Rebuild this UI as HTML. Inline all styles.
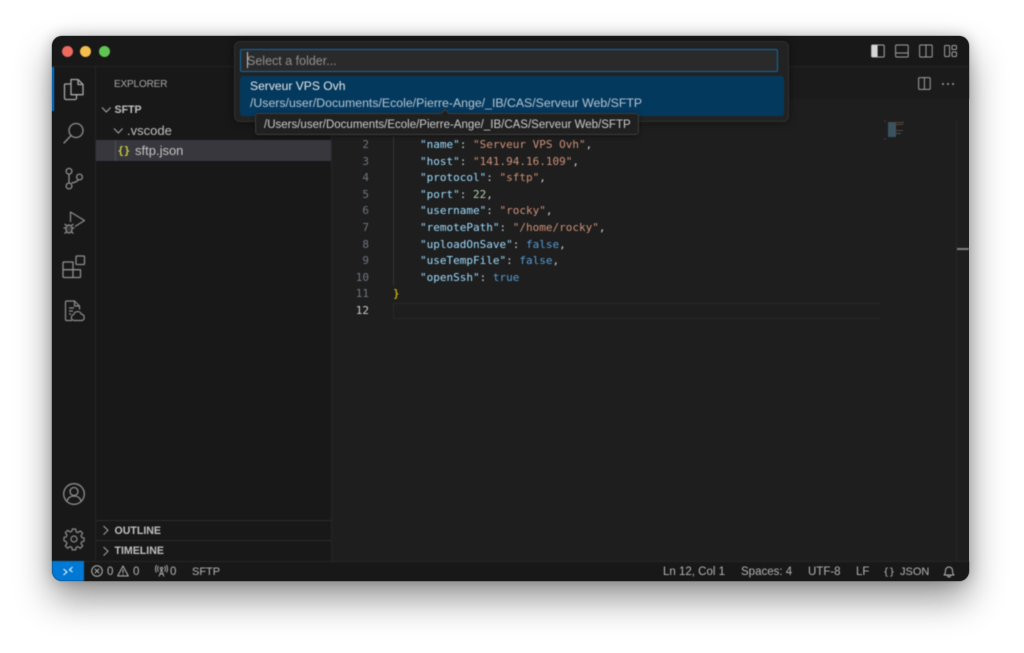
<!DOCTYPE html>
<html>
<head>
<meta charset="utf-8">
<style>
html,body{margin:0;padding:0;width:1024px;height:653px;overflow:hidden;background:#fff;}
*{box-sizing:border-box;}
body{font-family:"Liberation Sans",sans-serif;position:relative;}
.a{position:absolute;white-space:nowrap;}
#win{position:absolute;left:52px;top:36px;width:917px;height:545px;border-radius:10px;background:#1e1e1e;box-shadow:0 18px 36px rgba(0,0,0,.42),0 0 14px rgba(0,0,0,.22);overflow:hidden;}
.layer{position:absolute;left:0;top:0;width:1024px;height:653px;filter:blur(.4px);}
.code{font-family:"DejaVu Sans Mono","Liberation Mono",monospace;font-size:11px;line-height:16.6px;color:#9cdcfe;}
.ln{font-family:"DejaVu Sans Mono","Liberation Mono",monospace;font-size:11px;line-height:16.6px;color:#6e7681;text-align:right;width:30px;left:339px;}
.s{color:#ce9178}.p{color:#cccccc}.n{color:#b5cea8}.b{color:#569cd6}
.st{font-size:11.5px;color:#b4b4b4;top:565.500px;line-height:13px;}
svg{position:absolute;overflow:visible;fill:none;}
</style>
</head>
<body>
<div id="win"></div>
<div class="layer">
  <!-- regions -->
  <div class="a" style="left:52px;top:36px;width:917px;height:31px;background:#181818;border-radius:10px 10px 0 0;border-bottom:1px solid #232323;"></div>
  <div class="a" style="left:52px;top:67px;width:44px;height:494px;background:#181818;border-right:1px solid #262626;"></div>
  <div class="a" style="left:96px;top:67px;width:236px;height:494px;background:#181818;border-right:1px solid #262626;"></div>
  <div class="a" style="left:332px;top:67px;width:637px;height:32px;background:#1b1b1b;"></div>
  <div class="a" style="left:52px;top:561px;width:917px;height:20px;background:#181818;border-top:1px solid #262626;border-radius:0 0 10px 10px;"></div>
  <div class="a" style="left:52px;top:561px;width:32px;height:20px;background:#0078d4;border-radius:0 0 0 10px;"></div>

  <!-- traffic lights -->
  <div class="a" style="left:62px;top:46px;width:11px;height:11px;border-radius:50%;background:#ed6a5e;"></div>
  <div class="a" style="left:80px;top:46px;width:11px;height:11px;border-radius:50%;background:#f5bf4f;"></div>
  <div class="a" style="left:99px;top:46px;width:11px;height:11px;border-radius:50%;background:#61c554;"></div>

  <!-- activity bar -->
  <div class="a" style="left:52px;top:67px;width:2px;height:44px;background:#0078d4;"></div>
  <svg style="left:63px;top:78px" width="22" height="23" stroke="#a8a8a8" stroke-width="1.300" stroke-linejoin="round"><path d="M8 1.500h7l5 5v10.200h-12z"/><path d="M15 1.500v5h5"/><path d="M8 6H2.500a1 1 0 0 0-1 1v13a1.500 1.500 0 0 0 1.500 1.500h9a1.500 1.500 0 0 0 1.500-1.500v-3.300"/></svg>
  <svg style="left:63px;top:122px" width="22" height="23" stroke="#8e8e8e" stroke-width="1.300"><circle cx="13" cy="8.500" r="7"/><path d="M8 13.500L1 21" stroke-linecap="round"/></svg>
  <svg style="left:64px;top:167px" width="20" height="23" stroke="#8e8e8e" stroke-width="1.300"><circle cx="5" cy="4.300" r="2.900"/><circle cx="5" cy="19" r="2.900"/><circle cx="15.500" cy="10" r="2.900"/><path d="M5 7.200v8.900M7.500 16c4-.5 6-2 7-3.300"/></svg>
  <svg style="left:62px;top:210px" width="24" height="25" stroke="#8e8e8e" stroke-width="1.200" stroke-linejoin="round"><path d="M8.500 12V2L22.500 10.500 13 16.500"/><path d="M4 18a3 3 0 0 1 6 0v2a3 3 0 0 1-6 0z" fill="#8e8e8e" fill-opacity=".25"/><path d="M4 18H1.500M10 18h2.500M4.500 15.500L2.500 14M9.500 15.500L11.500 14M4.500 22L2.500 23.500M9.500 22L11.500 23.500"/></svg>
  <svg style="left:62px;top:255px" width="24" height="24" stroke="#8e8e8e" stroke-width="1.300" stroke-linejoin="round"><rect x="14" y="1" width="8.500" height="8.500" rx="1"/><path d="M2 7h9v15.500H2a1 1 0 0 1-1-1V8a1 1 0 0 1 1-1zM1 14.700h17.500M11 14.700h7.500v6.800a1 1 0 0 1-1 1H11z"/></svg>
  <svg style="left:64px;top:300px" width="21" height="22" stroke="#8e8e8e" stroke-width="1.200" stroke-linejoin="round"><path d="M8 20.500H2.500a1 1 0 0 1-1-1V2a1 1 0 0 1 1-1h8l5 5v3.500"/><path d="M10.500 1v5h5"/><path d="M5 8h5M5 11h4M5 14h2"/><path d="M10 20.500a3 3 0 0 1-.3-5.900 4 4 0 0 1 7.600-.5 3.300 3.300 0 0 1 .7 6.400z" fill="#181818"/></svg>
  <svg style="left:63px;top:483px" width="22" height="22" stroke="#8e8e8e" stroke-width="1.300"><circle cx="11" cy="11" r="10.300"/><circle cx="11" cy="8.500" r="4"/><path d="M4 18c1-3.500 4-5 7-5s6 1.500 7 5"/></svg>
  <svg style="left:63px;top:528px" width="22" height="22" viewBox="0 0 22 22" stroke="#8e8e8e" stroke-width="1.200" stroke-linejoin="round"><circle cx="11" cy="11" r="3"/><path d="M9.300 1h3.400l.5 2.900 1.700.7 2.400-1.700 2.400 2.400-1.700 2.400.7 1.700 2.300.5v3.400l-2.300.5-.7 1.700 1.700 2.400-2.400 2.400-2.400-1.700-1.700.7-.5 2.600H9.300l-.5-2.600-1.700-.7-2.400 1.700-2.400-2.400 1.700-2.400-.7-1.700L1 12.700V9.300l2.300-.5.700-1.700-1.700-2.400 2.400-2.400 2.400 1.700 1.700-.7z"/></svg>

  <!-- sidebar -->
  <div class="a" style="left:114px;top:77.500px;font-size:10px;letter-spacing:-.15px;line-height:14px;color:#a8a8a8;">EXPLORER</div>
  <svg style="left:101px;top:106px" width="11" height="8" stroke="#a8a8a8" stroke-width="1"><path d="M1 1.500l4.300 4.500 4.300-4.500"/></svg>
  <div class="a" style="left:114.500px;top:103px;font-size:10.600px;font-weight:bold;line-height:14px;color:#c0c0c0;">SFTP</div>
  <svg style="left:113px;top:127px" width="11" height="8" stroke="#a8a8a8" stroke-width="1"><path d="M1 1.500l4.300 4.500 4.300-4.500"/></svg>
  <div class="a" style="left:127px;top:123px;font-size:13px;line-height:15px;color:#c0c0c0;">.vscode</div>
  <div class="a" style="left:96px;top:140px;width:235px;height:21px;background:#37373d;"></div>
  <div class="a" style="left:115px;top:140px;width:1px;height:21px;background:#4c4c52;"></div>
  <div class="a" style="left:117.500px;top:144px;font-family:'DejaVu Sans Mono',monospace;font-size:10.500px;font-weight:bold;line-height:14px;color:#cbcb41;">{}</div>
  <div class="a" style="left:135px;top:143px;font-size:13px;line-height:15px;color:#c4c4c4;">sftp.json</div>

  <div class="a" style="left:96px;top:520px;width:235px;height:1px;background:#2b2b2b;"></div>
  <div class="a" style="left:96px;top:540px;width:235px;height:1px;background:#2b2b2b;"></div>
  <svg style="left:102px;top:525px" width="8" height="11" stroke="#a8a8a8" stroke-width="1"><path d="M1.500 1l4.500 4.300-4.500 4.300"/></svg>
  <div class="a" style="left:114.500px;top:524px;font-size:10.600px;font-weight:bold;line-height:14px;color:#c0c0c0;">OUTLINE</div>
  <svg style="left:102px;top:546px" width="8" height="11" stroke="#a8a8a8" stroke-width="1"><path d="M1.500 1l4.500 4.300-4.500 4.300"/></svg>
  <div class="a" style="left:114.500px;top:544px;font-size:10.600px;font-weight:bold;line-height:14px;color:#c0c0c0;">TIMELINE</div>

  <!-- title bar icons -->
  <svg style="left:871px;top:44px" width="14" height="14" stroke="#a8a8a8" stroke-width="1"><rect x=".6" y="1" width="12.600" height="12" rx="1"/><rect x=".6" y="1" width="6" height="12" fill="#d6d6d6" stroke="none"/></svg>
  <svg style="left:895px;top:44px" width="14" height="14" stroke="#a0a0a0" stroke-width="1"><rect x=".6" y="1" width="12.600" height="12" rx="1"/><path d="M.6 9h12.600"/></svg>
  <svg style="left:919px;top:44px" width="14" height="14" stroke="#a0a0a0" stroke-width="1"><rect x=".6" y="1" width="12.600" height="12" rx="1"/><path d="M7 1v12"/></svg>
  <svg style="left:944px;top:44px" width="14" height="14" stroke="#a0a0a0" stroke-width="1"><rect x=".6" y="1.500" width="5" height="11" rx="1"/><rect x="8" y="1.500" width="4.500" height="4" rx="1"/><rect x="8" y="8" width="4.500" height="4.500" rx="1"/></svg>

  <!-- tab bar icons -->
  <svg style="left:918px;top:77px" width="13" height="13" stroke="#a0a0a0" stroke-width="1"><rect x=".6" y=".6" width="11.600" height="11.800" rx="1"/><path d="M6.400.6v11.800"/></svg>
  <div class="a" style="left:942px;top:83px;width:2px;height:2px;background:#a0a0a0;border-radius:50%;box-shadow:5px 0 0 #a0a0a0,10px 0 0 #a0a0a0;"></div>

  <!-- editor -->
  <div class="a ln" style="top:137px;">2</div>
  <div class="a ln" style="top:153.600px;">3</div>
  <div class="a ln" style="top:170.200px;">4</div>
  <div class="a ln" style="top:186.800px;">5</div>
  <div class="a ln" style="top:203.400px;">6</div>
  <div class="a ln" style="top:220px;">7</div>
  <div class="a ln" style="top:236.600px;">8</div>
  <div class="a ln" style="top:253.200px;">9</div>
  <div class="a ln" style="top:269.800px;">10</div>
  <div class="a ln" style="top:286.400px;">11</div>
  <div class="a ln" style="top:303px;color:#cccccc;">12</div>
  <div class="a" style="left:393px;top:136px;width:1px;height:150px;background:#333333;"></div>

  <div class="a code" style="left:420px;top:137px;">"name"<span class="p">: </span><span class="s">"Serveur VPS Ovh"</span><span class="p">,</span></div>
  <div class="a code" style="left:420px;top:153.600px;">"host"<span class="p">: </span><span class="s">"141.94.16.109"</span><span class="p">,</span></div>
  <div class="a code" style="left:420px;top:170.200px;">"protocol"<span class="p">: </span><span class="s">"sftp"</span><span class="p">,</span></div>
  <div class="a code" style="left:420px;top:186.800px;">"port"<span class="p">: </span><span class="n">22</span><span class="p">,</span></div>
  <div class="a code" style="left:420px;top:203.400px;">"username"<span class="p">: </span><span class="s">"rocky"</span><span class="p">,</span></div>
  <div class="a code" style="left:420px;top:220px;">"remotePath"<span class="p">: </span><span class="s">"/home/rocky"</span><span class="p">,</span></div>
  <div class="a code" style="left:420px;top:236.600px;">"uploadOnSave"<span class="p">: </span><span class="b">false</span><span class="p">,</span></div>
  <div class="a code" style="left:420px;top:253.200px;">"useTempFile"<span class="p">: </span><span class="b">false</span><span class="p">,</span></div>
  <div class="a code" style="left:420px;top:269.800px;">"openSsh"<span class="p">: </span><span class="b">true</span></div>
  <div class="a code" style="left:393px;top:286.400px;color:#ffd700;">}</div>
  <div class="a" style="left:393px;top:303px;width:487px;height:16px;border:1px solid #2a2a2a;border-right:none;"></div>

  <!-- minimap -->
  <div class="a" style="left:888px;top:122px;width:8px;height:15px;background:#41606f;opacity:.8;"></div>
  <div class="a" style="left:896px;top:124px;width:7px;height:1px;background:#5c4439;"></div>
  <div class="a" style="left:892px;top:122px;width:12px;height:1px;background:#5c4439;"></div>
  <div class="a" style="left:896px;top:130px;width:7px;height:1px;background:#5c4439;"></div>
  <div class="a" style="left:896px;top:133px;width:5px;height:1px;background:#38576a;"></div>
  <div class="a" style="left:884px;top:120px;width:2px;height:2px;background:#333333;"></div>
  <div class="a" style="left:884px;top:138px;width:2px;height:2px;background:#333333;"></div>
  <div class="a" style="left:956px;top:120px;width:1px;height:441px;background:#282828;"></div>
  <div class="a" style="left:957px;top:248px;width:12px;height:2px;background:#808080;"></div>

  <!-- quick pick -->
  <div class="a" style="left:234px;top:41px;width:555px;height:81px;background:#222222;border:1px solid #303030;border-radius:6px;box-shadow:0 0 8px rgba(0,0,0,.5);"></div>
  <div class="a" style="left:240px;top:49px;width:538px;height:23px;background:#2a2a2a;border:1px solid #0a6cb0;border-radius:2px;"></div>
  <div class="a" style="left:247px;top:52px;width:1px;height:16px;background:#c8c8c8;"></div>
  <div class="a" style="left:247px;top:53px;font-size:12.500px;line-height:16px;color:#8f8f8f;">Select a folder...</div>
  <div class="a" style="left:240px;top:76px;width:544px;height:40px;background:#04395e;border-radius:3px;"></div>
  <div class="a" style="left:250px;top:79px;font-size:12.100px;line-height:15px;color:#e8e8e8;">Serveur VPS Ovh</div>
  <div class="a" style="left:250px;top:96px;font-size:12.300px;line-height:15px;color:#b6c4cf;">/Users/user/Documents/Ecole/Pierre-Ange/_IB/CAS/Serveur Web/SFTP</div>

  <!-- tooltip -->
  <div class="a" style="left:255px;top:113px;width:384px;height:22px;background:#202020;border:1px solid #3c3c3c;border-radius:3px;box-shadow:0 1px 5px rgba(0,0,0,.5);"></div>
  <div class="a" style="left:442px;top:110px;width:6px;height:6px;background:#202020;border-left:1px solid #3c3c3c;border-top:1px solid #3c3c3c;transform:rotate(45deg);"></div>
  <div class="a" style="left:264px;top:118px;font-size:11.500px;line-height:15px;color:#cccccc;">/Users/user/Documents/Ecole/Pierre-Ange/_IB/CAS/Serveur Web/SFTP</div>

  <!-- status bar -->
  <svg style="left:62px;top:565px" width="12" height="12" stroke="#ffffff" stroke-width="1"><path d="M1.500 10L5 7 1.500 4"/><path d="M10.500 2L7.500 4.700 10.500 7"/></svg>
  <svg style="left:91px;top:565px" width="12" height="12" stroke="#b4b4b4" stroke-width="1"><circle cx="6" cy="6" r="5.300"/><path d="M3.800 3.800l4.400 4.400M8.200 3.800l-4.400 4.400"/></svg>
  <div class="a st" style="left:107px;">0</div>
  <svg style="left:117px;top:565px" width="12" height="12" stroke="#b4b4b4" stroke-width="1" stroke-linejoin="round"><path d="M6 1l5.300 10H.7z"/><path d="M6 4.500v3.500M6 9v1"/></svg>
  <div class="a st" style="left:133px;">0</div>
  <svg style="left:155px;top:565px" width="13" height="12" stroke="#b4b4b4" stroke-width=".9"><path d="M6.500 5L4 11.500M6.500 5L9 11.500M4.800 9h3.400"/><circle cx="6.500" cy="3.500" r="1.200"/><path d="M3.500 1C2.300 3 2.300 5 3.500 6.500M9.500 1c1.200 2 1.200 4 0 5.500M1.500 0C0 3 0 5 1.500 7.500M11.500 0c1.500 3 1.500 5 0 7.500"/></svg>
  <div class="a st" style="left:170px;">0</div>
  <div class="a st" style="left:192px;font-size:11px;">SFTP</div>
  <div class="a st" style="left:663px;">Ln 12, Col 1</div>
  <div class="a st" style="left:741px;">Spaces: 4</div>
  <div class="a st" style="left:808px;">UTF-8</div>
  <div class="a st" style="left:856px;">LF</div>
  <div class="a st" style="left:883px;font-family:'DejaVu Sans Mono',monospace;font-size:10px;">{}</div>
  <div class="a st" style="left:900px;font-size:11px;">JSON</div>
  <svg style="left:943px;top:564.500px" width="12" height="13" stroke="#b4b4b4" stroke-width="1" stroke-linejoin="round"><path d="M1 10c1.200-1 1.500-2 1.500-4.500a3.500 3.500 0 0 1 7 0C9.500 8 9.800 9 11 10z"/><path d="M4.500 10.500a1.500 1.500 0 0 0 3 0"/></svg>
</div>
</body>
</html>
